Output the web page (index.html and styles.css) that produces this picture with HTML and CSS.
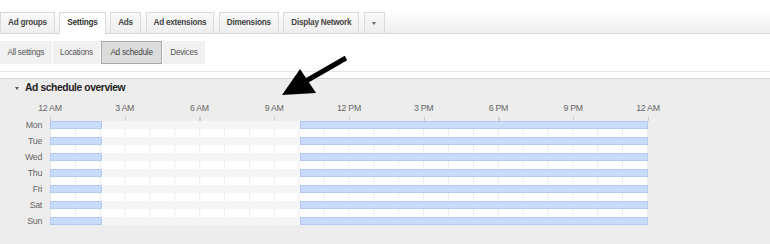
FILE: index.html
```html
<!DOCTYPE html>
<html lang="en">
<head>
  <meta charset="UTF-8" />
  <meta name="viewport" content="width=device-width, initial-scale=1.0"/>
  <title>Ad schedule</title>
  <link rel="stylesheet" href="styles.css">
</head>
<body>
  <div class="tabbar">
    <div class="tab">Ad groups</div>
    <div class="tab active">Settings</div>
    <div class="tab">Ads</div>
    <div class="tab">Ad extensions</div>
    <div class="tab">Dimensions</div>
    <div class="tab">Display Network</div>
    <div class="tab more"><span class="caret"></span></div>
  </div>

  <div class="subtabs">
    <div class="subtab">All settings</div>
    <div class="subtab">Locations</div>
    <div class="subtab active">Ad schedule</div>
    <div class="subtab">Devices</div>
  </div>

  <div class="divider"></div>

  <div class="panel">
    <div class="panel-title"><span class="caret"></span>Ad schedule overview</div>

    <div class="hours">
      <span>12 AM</span><span>3 AM</span><span>6 AM</span><span>9 AM</span><span>12 PM</span>
      <span>3 PM</span><span>6 PM</span><span>9 PM</span><span>12 AM</span>
    </div>
    <div class="ticks"></div>

    <div class="schedule" id="schedule"></div>
  </div>

  <svg class="arrow" width="770" height="244" viewBox="0 0 770 244">
    <line x1="346" y1="58" x2="306" y2="81" stroke="#000" stroke-width="5"/>
    <polygon points="282,95 300,69 316,93" fill="#000"/>
  </svg>

  <script>
    const days = ["Mon", "Tue", "Wed", "Thu", "Fri", "Sat", "Sun"];
    // hours: on 0-2, off 2-10, on 10-24
    const blocks = [[2, true], [8, false], [14, true]];
    const schedule = document.getElementById("schedule");

    days.forEach(function (d) {
      const row = document.createElement("div");
      row.className = "day";
      let segs = "";
      blocks.forEach(function (b) {
        segs += '<div class="seg' + (b[1] ? ' on' : '') + '" style="flex:' + b[0] + '"></div>';
      });
      row.innerHTML =
        '<div class="day-name">' + d + '</div>' +
        '<div class="track"><div class="bar">' + segs + '</div><div class="hour-cells"></div></div>';
      schedule.appendChild(row);
    });
  </script>
</body>
</html>
```

FILE: styles.css
```css
body {
  margin: 0;
  width: 770px;
  height: 244px;
  overflow: hidden;
  position: relative;
  background: #fff;
  font-family: "Liberation Sans", Arial, sans-serif;
  color: #333;
}

/* top tabs */
.tabbar {
  margin-top: 12px;
  height: 21px;
  display: flex;
  align-items: flex-end;
  gap: 4.6px;
  background: linear-gradient(#fefefe, #efefef);
  border-bottom: 1px solid #d6d6d6;
}

.tab {
  box-sizing: border-box;
  height: 21px;
  line-height: 20px;
  padding: 0 7px;
  border: 1px solid #dadada;
  border-bottom: none;
  background: linear-gradient(#f9f9f9, #eeeeee);
  font-size: 8.2px;
  letter-spacing: -0.25px;
  font-weight: bold;
  color: #444;
  white-space: nowrap;
}

.tab.active {
  background: #fff;
  height: 22px;
  margin-bottom: -1px;
  color: #333;
}

.tab.more {
  width: 21px;
  display: flex;
  align-items: center;
  justify-content: center;
}

.caret {
  display: inline-block;
  width: 0;
  height: 0;
  border-left: 2.5px solid transparent;
  border-right: 2.5px solid transparent;
  border-top: 3px solid #666;
}

/* sub tabs */
.subtabs {
  margin-top: 7px;
  display: flex;
  gap: 1px;
}

.subtab {
  box-sizing: border-box;
  height: 23px;
  line-height: 23px;
  padding: 0 7.5px;
  background: #f1f1f1;
  font-size: 8.2px;
  letter-spacing: -0.25px;
  color: #555;
  white-space: nowrap;
}

.subtab.active {
  background: #dcdcdc;
  border: 1px solid #a8a8a8;
  line-height: 21px;
  padding: 0 8px;
  color: #444;
}

.divider {
  margin-top: 7px;
  border-top: 1px solid #e6e6e6;
}

/* overview panel */
.panel {
  margin-top: 6px;
  border-top: 1px solid #d6d6d6;
  background: #ededed;
  height: 166px;
  padding-top: 3px;
  box-sizing: border-box;
}

.panel-title {
  padding-left: 15px;
  height: 12px;
  line-height: 12px;
  font-size: 10.3px;
  letter-spacing: -0.4px;
  font-weight: bold;
  color: #222;
  display: flex;
  align-items: center;
}

.panel-title .caret {
  margin-right: 6px;
  border-top-color: #555;
}

.hours {
  margin-top: 9px;
  margin-left: 12.6px;
  display: grid;
  grid-template-columns: repeat(9, 74.75px);
  line-height: 11px;
  font-size: 8.8px;
  letter-spacing: -0.3px;
  color: #666;
  text-align: center;
}

.ticks {
  margin-top: 3px;
  margin-left: 50px;
  width: 599px;
  height: 4px;
  background: repeating-linear-gradient(to right, #cfcfcf 0 1px, transparent 1px 74.75px);
}

.day {
  display: flex;
  height: 16px;
}

.day:last-child {
  height: 8px;
}

.day-name {
  box-sizing: border-box;
  width: 50px;
  padding-right: 8px;
  text-align: right;
  font-size: 8.8px;
  letter-spacing: -0.3px;
  line-height: 8px;
  color: #666;
}

.track {
  width: 598px;
}

.bar {
  height: 8px;
  display: flex;
  background: #f5f5f5;
}

.seg.on {
  box-sizing: border-box;
  background: #cadcfc;
  border: 1px solid #b3cbf3;
}

.hour-cells {
  height: 8px;
  background-color: #fff;
  background-image: linear-gradient(to right, #ebebeb 1px, transparent 1px);
  background-size: calc(100% / 24) 100%;
  border-right: 1px solid #ebebeb;
}

.day:last-child .hour-cells {
  display: none;
}

.arrow {
  position: absolute;
  left: 0;
  top: 0;
  pointer-events: none;
}
```
